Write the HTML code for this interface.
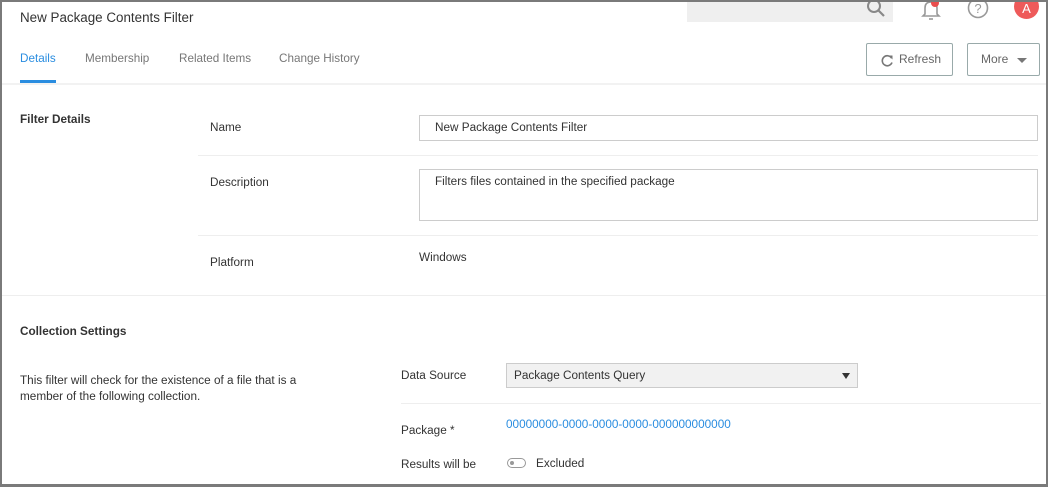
<!DOCTYPE html><html><head><style>
body{margin:0;width:1048px;height:486px;overflow:hidden;font-family:"Liberation Sans",sans-serif;color:#333;font-size:11.75px}
.f{position:absolute;left:0;top:0;width:1044px;height:482px;border:2px solid #7a7a7a;border-bottom:3px solid #7a7a7a;background:#fff;overflow:hidden}
.a{position:absolute;white-space:nowrap}
.ln{position:absolute;height:1px;background:#eee}
.btn{position:absolute;border:1px solid #9aa;border-radius:2px;box-sizing:border-box;color:#666;font-size:12px}
</style></head><body><div class="f">
<div class="a" style="left:685px;top:-2px;width:206px;height:22px;background:#efefef"></div>
<svg class="a" style="left:864px;top:-4px" width="22" height="22"><circle cx="8" cy="8" r="6" fill="none" stroke="#888" stroke-width="2"/><line x1="12.5" y1="12.5" x2="18" y2="18" stroke="#888" stroke-width="2.2"/></svg>
<svg class="a" style="left:918px;top:-2px" width="24" height="22"><path d="M5 14 L5 8 Q5 2 11 2 Q17 2 17 8 L17 14 L19 16 L3 16 Z" fill="none" stroke="#999" stroke-width="1.6"/><line x1="9" y1="19" x2="13" y2="19" stroke="#999" stroke-width="1.6"/><circle cx="15" cy="3" r="4" fill="#e94e4e"/></svg>
<svg class="a" style="left:965px;top:-6px" width="24" height="24"><circle cx="11" cy="12" r="9.5" fill="none" stroke="#999" stroke-width="1.6"/><text x="11" y="17" font-size="13" text-anchor="middle" fill="#999" font-family="Liberation Sans">?</text></svg>
<div class="a" style="left:1012px;top:-8px;width:25px;height:25px;border-radius:50%;background:#ee5a5a;color:#fff;text-align:center;line-height:30px;font-size:13px">A</div>
<div class="a" style="left:18px;top:8px;font-size:13.4px;color:#333">New Package Contents Filter</div>
<div class="a" style="left:18px;top:50px;font-size:11.7px;color:#2a8de0">Details</div>
<div class="a" style="left:83px;top:50px;font-size:11.7px;color:#777">Membership</div>
<div class="a" style="left:177px;top:50px;font-size:11.7px;color:#777">Related Items</div>
<div class="a" style="left:277px;top:50px;font-size:11.7px;color:#777">Change History</div>
<div class="a" style="left:18px;top:78px;width:36px;height:3px;background:#2a8de0"></div>
<div class="ln" style="left:0;top:81px;width:1044px;height:2px;background:#f2f2f2"></div>
<div class="btn" style="left:864px;top:41px;width:87px;height:33px"><svg class="a" style="left:13px;top:10px" width="14" height="14"><path d="M11.5 4 A5 5 0 1 0 12 8.5" fill="none" stroke="#777" stroke-width="1.6"/><path d="M8.5 1.5 L12.5 1.5 L12.5 5.5 Z" fill="#777"/></svg><span class="a" style="left:32px;top:8px">Refresh</span></div>
<div class="btn" style="left:965px;top:41px;width:73px;height:33px"><span class="a" style="left:13px;top:8px">More</span><span class="a" style="left:49px;top:14px;width:0;height:0;border-left:5px solid transparent;border-right:5px solid transparent;border-top:5px solid #777"></span></div>
<div class="a" style="left:18px;top:111px;font-weight:bold">Filter Details</div>
<div class="a" style="left:208px;top:119px">Name</div>
<div class="a" style="left:417px;top:113px;width:619px;height:26px;border:1px solid #ccc;box-sizing:border-box;padding:5px 15px">New Package Contents Filter</div>
<div class="ln" style="left:196px;top:153px;width:840px"></div>
<div class="a" style="left:208px;top:174px">Description</div>
<div class="a" style="left:417px;top:167px;width:619px;height:52px;border:1px solid #ccc;box-sizing:border-box;padding:5px 15px">Filters files contained in the specified package</div>
<div class="ln" style="left:196px;top:233px;width:840px"></div>
<div class="a" style="left:208px;top:254px">Platform</div>
<div class="a" style="left:417px;top:249px">Windows</div>
<div class="ln" style="left:0;top:293px;width:1044px"></div>
<div class="a" style="left:18px;top:323px;font-weight:bold">Collection Settings</div>
<div class="a" style="left:18px;top:371px;line-height:16px">This filter will check for the existence of a file that is a<br>member of the following collection.</div>
<div class="a" style="left:399px;top:367px">Data Source</div>
<div class="a" style="left:504px;top:361px;width:352px;height:25px;background:#f1f1f1;border:1px solid #ccc;box-sizing:border-box;padding:5px 7px">Package Contents Query<span class="a" style="left:335px;top:9px;border-left:4px solid transparent;border-right:4px solid transparent;border-top:6px solid #333"></span></div>
<div class="ln" style="left:399px;top:401px;width:640px"></div>
<div class="a" style="left:399px;top:422px">Package *</div>
<div class="a" style="left:504px;top:416px;color:#2a8de0">00000000-0000-0000-0000-000000000000</div>
<div class="a" style="left:399px;top:456px">Results will be</div>
<div class="a" style="left:505px;top:456px;width:17px;height:8px;border:1px solid #999;border-radius:6px"><span class="a" style="left:2px;top:2px;width:4px;height:4px;border-radius:50%;background:#999"></span></div>
<div class="a" style="left:534px;top:455px">Excluded</div>
</div></body></html>
